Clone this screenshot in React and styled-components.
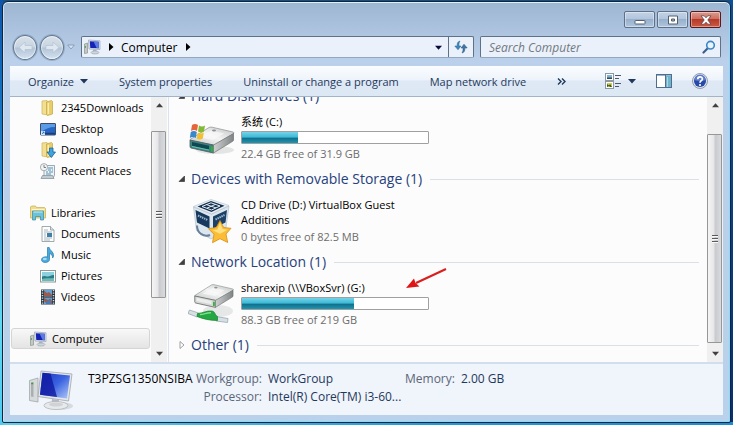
import styled, { createGlobalStyle } from 'styled-components';

const GlobalStyle = createGlobalStyle`
  * {
    box-sizing: border-box;
  }

  body {
    margin: 0;
    font-family: "Open Sans", "Noto Sans CJK SC", sans-serif;
    font-size: 12px;
    line-height: 15px;
    color: #000;
  }

  button {
    padding: 0;
    border: 0;
    background: none;
    font: inherit;
    color: inherit;
  }

  svg {
    display: block;
    flex: none;
  }
`;

const Desktop = styled.div`
  display: flex;
  height: 100vh;
  min-height: 320px;
  padding: 1px 2px 2px;
  background:
    linear-gradient(180deg, #0d56ac 0%, #1a86cf 40%, #5fd8f2 75%, #4ccaf0 100%) left / 3px 100% no-repeat,
    linear-gradient(90deg, #5fd0ee, #1e9bdc 60%, #1b8fd6) bottom / 100% 3px no-repeat,
    linear-gradient(180deg, #0c4f9c, #04307a) right / 3px 100% no-repeat,
    #17507f;
`;

const Window = styled.main`
  flex: 1;
  min-width: 0;
  display: flex;
  flex-direction: column;
  padding: 1px 7px 7px;
  border: 1px solid #10263f;
  border-radius: 6px 6px 2px 2px;
  background: linear-gradient(180deg, #9cb5d1 0, #a9c0dc 22px, #bbd0ea 60px, #b9d1ea 100%);
  box-shadow: inset 0 1px 0 #e6eff8, inset 1px 0 0 #cfe0f2, inset -1px 0 0 #8fd9f3, inset 0 -1px 0 #8fd9f3;
`;

const TitleBar = styled.header`
  display: flex;
  justify-content: flex-end;
  gap: 2px;
  height: 33px;
  padding: 8px 2px 0;
`;

const CaptionButton = styled.button`
  display: flex;
  align-items: center;
  justify-content: center;
  width: 31px;
  height: 17px;
  border: 1px solid ${(props) => (props.$close ? '#5a1a1c' : '#5c7088')};
  border-radius: 2px;
  background: ${(props) => (props.$close
    ? 'linear-gradient(180deg, #dd9a8e 0, #cf6f60 45%, #b63a2a 50%, #cb5a42 100%)'
    : 'linear-gradient(180deg, #c3d3e6 0, #b1c5dc 45%, #98b0cc 50%, #afc5de 100%)')};
  box-shadow: inset 0 0 0 1px rgb(255 255 255 / 40%);
`;

const NavBar = styled.nav`
  display: flex;
  align-items: center;
  gap: 6px;
  height: 22px;
  margin-bottom: 8px;
  padding-right: 2px;
`;

const History = styled.div`
  display: flex;
  align-items: center;
  gap: 3px;
  width: 65px;
  height: 26px;
  padding-left: 3px;
`;

const RoundButton = styled.button`
  display: flex;
  align-items: center;
  justify-content: center;
  width: 25px;
  height: 25px;
  border: 1px solid #62788f;
  border-radius: 50%;
  background: linear-gradient(180deg, #d8e1ea 0, #c8d4e0 48%, #b3c4d6 52%, #d3e2f0 100%);
  box-shadow: inset 0 0 0 1px rgb(255 255 255 / 50%), 0 0 0 1px rgb(120 145 175 / 50%);
`;

const Field = styled.div`
  display: flex;
  align-items: center;
  height: 22px;
  border: 1px solid #5e7186;
  border-bottom-color: #93a7be;
  border-radius: 2px;
  background: #eaf1fa;
`;

const AddressBar = styled(Field)`
  flex: 1;
  min-width: 0;
  padding-left: 2px;
`;

const Crumbs = styled.div`
  flex: 1;
  display: flex;
  align-items: center;
  gap: 6px;
`;

const DropButton = styled.button`
  display: flex;
  align-items: center;
  justify-content: center;
  width: 20px;
  height: 20px;
`;

const RefreshButton = styled.button`
  display: flex;
  align-items: center;
  justify-content: center;
  width: 25px;
  height: 20px;
  border-left: 1px solid #5e7186;
`;

const SearchBox = styled(Field)`
  width: 241px;
  padding: 0 4px 0 8px;
`;

const SearchInput = styled.input`
  flex: 1;
  min-width: 0;
  padding: 0;
  border: 0;
  outline: 0;
  background: none;
  font: inherit;
  font-style: italic;

  &::placeholder {
    color: #73787f;
    opacity: 1;
  }
`;

const Toolbar = styled.div`
  display: flex;
  align-items: center;
  gap: 31px;
  height: 31px;
  padding: 0 15px 0 18px;
  border-bottom: 1px solid #a3b4c8;
  background: linear-gradient(180deg, #fbfdff 0, #eef4fb 45%, #dfe9f6 50%, #dde8f5 100%);
  color: #1e395b;
  font-size: 11px;
  white-space: nowrap;
`;

const ToolButton = styled.button`
  display: flex;
  align-items: center;
  gap: 6px;
`;

const ToolIcons = styled.div`
  flex: 1;
  display: flex;
  align-items: center;
  justify-content: flex-end;
  gap: 20px;
`;

const Body = styled.div`
  flex: 1;
  min-height: 0;
  display: flex;
  background: #fcfcfc;
`;

const Sidebar = styled.aside`
  display: flex;
  width: 159px;
  padding-right: 1px;
  border-right: 1px solid #d9e3f0;
  font-size: 11px;
`;

const Tree = styled.ul`
  flex: 1;
  min-width: 0;
  margin: 0;
  padding: 0 1px;
  overflow: hidden;
  list-style: none;
`;

const TreeItem = styled.li`
  display: flex;
  align-items: center;
  gap: 5px;
  height: 21px;
  margin-top: ${(props) => (props.$root ? '21px' : '0')};
  padding-left: ${(props) => (props.$root ? '18px' : '28px')};
  border: 1px solid ${(props) => (props.$selected ? '#d5d5d5' : 'transparent')};
  border-radius: 3px;
  background: ${(props) => (props.$selected ? 'linear-gradient(180deg, #f8f8f8, #e4e4e4)' : 'none')};
  white-space: nowrap;
`;

const Bar = styled.div`
  display: flex;
  flex-direction: column;
  width: 16px;
  background: #f0f0f0;
`;

const BarArrow = styled.button`
  display: flex;
  align-items: center;
  justify-content: center;
  height: 17px;
`;

const BarSpace = styled.div`
  flex: ${(props) => props.$size} 0 0;
`;

const Thumb = styled.div`
  flex: ${(props) => props.$size} 0 0;
  display: flex;
  align-items: center;
  justify-content: center;
  margin-right: 1px;
  border: 1px solid #979797;
  border-radius: 1px;
  background: linear-gradient(90deg, #f5f5f5 0, #e6e6e8 45%, #c9cacd 55%, #dadbde 100%);
`;

const Content = styled.section`
  flex: 1;
  min-width: 0;
  display: flex;
  flex-direction: column;
  justify-content: flex-end;
  padding: 0 8px 6px 9px;
  overflow: hidden;
  font-size: 11px;
`;

const GroupTitle = styled.h2`
  display: flex;
  align-items: center;
  gap: 5px;
  height: 22px;
  margin: 0;
  color: #27417c;
  font-size: 14px;
  font-weight: 400;
  line-height: 22px;
  white-space: nowrap;

  &::after {
    content: "";
    flex: 1;
    height: 1px;
    margin-left: 3px;
    background: #dcdfe3;
  }
`;

const Drive = styled.div`
  position: relative;
  display: flex;
  gap: 5px;
  height: 61px;
  padding: 7px 0 0 10px;
`;

const DriveIcon = styled.div`
  display: flex;
  align-items: center;
  justify-content: center;
  width: 48px;
  height: 48px;
`;

const DriveInfo = styled.div`
  display: flex;
  flex-direction: column;
  gap: 2px;
  width: 188px;
`;

const Meter = styled.div`
  height: 13px;
  border: 1px solid #a0a0a0;
  border-radius: 1px;
  background: #fff;
`;

const MeterFill = styled.div`
  height: 100%;
  background: linear-gradient(180deg, #74d3e8 0, #40b9d6 45%, #12708d 58%, #2196b0 100%);
`;

const Free = styled.div`
  color: #6d6d6d;
`;

const Pointer = styled.svg`
  position: absolute;
  left: 226px;
  top: -6px;
`;

const Details = styled.footer`
  display: flex;
  height: 53px;
  padding: 6px 18px 0;
  border-top: 2px solid #d3deec;
  background: #f0f4fb;
  line-height: 18px;
  white-space: nowrap;
`;

const PcName = styled.div`
  width: 106px;
  margin-left: 14px;
`;

const Facts = styled.dl`
  display: grid;
  grid-template-columns: 68px 131px auto auto;
  grid-auto-rows: 18px;
  column-gap: 6px;
  margin: 0;
  color: #1e395b;

  dt {
    color: #5a6779;
    text-align: right;
  }

  dd {
    margin: 0;
  }
`;

const Caret = ({ dir = 'down', color = '#1e395b', size = 8 }) => {
  const turn = { down: 0, right: -90, up: 180 }[dir];
  return (
    <svg width={size} height={size} viewBox="0 0 8 8" aria-hidden="true">
      <path d="M0 2h8L4 6.500z" fill={color} transform={`rotate(${turn} 4 4)`} />
    </svg>
  );
};

const Fold = ({ open }) => (
  <svg width="8" height="10" viewBox="0 0 8 10" aria-hidden="true">
    {open
      ? <path d="M6.500 2v5.500H1z" fill="#404040" stroke="#262626" strokeWidth=".6" />
      : <path d="M2 1.500v7l4-3.500z" fill="#fff" stroke="#a0a0a0" />}
  </svg>
);

const ComputerIcon = () => (
  <svg width="17" height="16" viewBox="0 0 17 16" aria-hidden="true">
    <path d="M.5 5l3-1v10l-3 .5z" fill="#c4c9c6" stroke="#8a928f" strokeWidth=".7" />
    <path d="M1.300 7v2" stroke="#4a9a5c" />
    <path d="M4.500 1l11.500.8v8.700L5 10z" fill="#dfe4ea" stroke="#9aa5b3" strokeWidth=".7" />
    <path d="M5.800 2.200l9 .6v6.500l-8.500-.3z" fill="#1522b4" />
    <path d="M9.500 2.400l5.300.4v6.500l-2-.1z" fill="#5a7be4" />
    <path d="M9 10.500h3.500v2H9z" fill="#a9b3be" />
    <ellipse cx="11" cy="13.500" rx="4" ry="1.500" fill="#ced6dd" stroke="#98a3ae" strokeWidth=".6" />
  </svg>
);

const FolderIcon = ({ download }) => (
  <svg width="16" height="16" viewBox="0 0 16 16" aria-hidden="true">
    <path d="M2 1l5-.5 1 1V15l-6-1z" fill="#f2df92" stroke="#cbb25a" strokeWidth=".7" />
    <path d="M6.500 2l5-1.500 1 1v12.500l-5 1.500-1-1z" fill="#e9cd69" stroke="#c3a441" strokeWidth=".7" />
    <path d="M8.300 3v11" stroke="#fbf0b9" strokeWidth="1.300" />
    {download && (
      <path d="M9.500 6h3.500v4h2.500L11.300 15.500 7 10h2.500z" fill="#3fa3dd" stroke="#1b6499" strokeWidth=".8" />
    )}
  </svg>
);

const DesktopIcon = () => (
  <svg width="16" height="16" viewBox="0 0 16 16" aria-hidden="true">
    <rect x=".5" y="2.500" width="15" height="11.500" rx=".5" fill="#2566c4" stroke="#3a4e6c" />
    <path d="M1 3h14v3C9 6 5 8 1 11z" fill="#5c9ce6" />
    <path d="M1 12.500h14" stroke="#1d3f78" strokeWidth="1.500" />
    <rect x="1" y="10" width="4" height="4" fill="#cfe5fa" />
    <path d="M2 13l2-2M2.500 11H4v1.500" fill="none" stroke="#1d5fae" strokeWidth=".7" />
  </svg>
);

const RecentIcon = () => (
  <svg width="16" height="16" viewBox="0 0 16 16" aria-hidden="true">
    <path d="M4 2.500h10.500V12l-1 2.500H3.500L4 12z" fill="#eef3f6" stroke="#8497a5" strokeWidth=".8" />
    <path d="M2.500 12.500h10l1.500 3H1z" fill="#c2ccd3" stroke="#7d8c98" strokeWidth=".7" />
    <path d="M8 5h5M8 7h3M12 7h1M6 9h2M9 9h4M6 11h5" stroke="#5590b5" />
    <circle cx="4" cy="4.200" r="3.600" fill="#f2f4f4" stroke="#919da5" strokeWidth=".8" />
    <path d="M4 2v2.500h2" fill="none" stroke="#59656d" strokeWidth=".8" />
  </svg>
);

const LibrariesIcon = () => (
  <svg width="16" height="16" viewBox="0 0 16 16" aria-hidden="true">
    <path d="M.5 2l1-1h4l1 1.500h8l1 1V13H.5z" fill="#f0dc89" stroke="#c7ae57" strokeWidth=".7" />
    <path d="M1.500 4.500h13" stroke="#fff5c9" />
    <path d="M2.500 6h11v9h-3v-3.500h-5V15h-3z" fill="#6cc2da" stroke="#338ba9" strokeWidth=".7" />
    <path d="M3.500 7h9" stroke="#c6edf5" />
  </svg>
);

const DocumentIcon = () => (
  <svg width="16" height="16" viewBox="0 0 16 16" aria-hidden="true">
    <path d="M2 .5h8.500L14 4v11.500H2z" fill="#fbfcfc" stroke="#8c9797" strokeWidth=".8" />
    <path d="M10.500.5V4H14" fill="#dce3e6" stroke="#8c9797" strokeWidth=".8" />
    <path d="M4 4h4M4 6h8M4 8h2M4 10h2M4 12h8M4 14h6" stroke="#9ba7ad" strokeWidth=".8" />
    <rect x="7" y="7" width="5" height="4" fill="#3f80a6" />
  </svg>
);

const MusicIcon = () => (
  <svg width="16" height="16" viewBox="0 0 16 16" aria-hidden="true">
    <path d="M7.500.5h1.700C9.500 3.500 14 4.500 13.500 9c-.2 1-.5 1.600-1 2 .3-2.500-.8-3.800-3-4.500v6c0 1.800-2 3-4.300 3C3 15.500 1.500 14.300 1.500 12.800c0-2 2.500-3.500 6-2.800z" fill="#4aa9dc" stroke="#2778ad" strokeWidth=".7" />
    <ellipse cx="4.800" cy="12" rx="2" ry="1.200" fill="#a4dbf5" />
  </svg>
);

const PictureIcon = () => (
  <svg width="16" height="16" viewBox="0 0 16 16" aria-hidden="true">
    <rect x=".5" y="2.500" width="15" height="11.500" fill="#fafbfb" stroke="#8d9899" />
    <rect x="2" y="4" width="12" height="8.500" fill="#8bd0de" />
    <path d="M2 8.500c3-1.500 4 .5 6 0s4-2 6-1.500v5.500H2z" fill="#2b7d83" />
    <path d="M2 11c4-1.500 8 0 12-1v2.500H2z" fill="#6bb9b8" />
  </svg>
);

const VideoIcon = () => (
  <svg width="16" height="16" viewBox="0 0 16 16" aria-hidden="true">
    <rect x="1" y=".5" width="14" height="15" fill="#273442" />
    <path d="M2.500 1v14M13.500 1v14" stroke="#cfd9df" strokeWidth="1.500" strokeDasharray="1.200 1.300" />
    <rect x="4" y="1" width="8" height="6.500" fill="#5fa3d8" />
    <rect x="4" y="8.500" width="8" height="6.500" fill="#5fa3d8" />
    <path d="M4 1.500l3 2.500 2-1 3 3v1.500H4zM4 9l4 2 2-1.500L12 12v3H7l-3-3z" fill="#9b5b4c" />
    <path d="M6 14c1-2 3-3 5-2v3H6z" fill="#3f7cbc" />
  </svg>
);

const ViewsIcon = () => (
  <svg width="17" height="16" viewBox="0 0 17 16" aria-hidden="true">
    <rect x=".5" y=".5" width="8" height="7" fill="#fff" stroke="#8d98a6" />
    <rect x="2" y="2" width="5" height="4" fill="#7fb3cf" />
    <path d="M2 4.500h5V6H2z" fill="#2f4b58" />
    <rect x=".5" y="8.500" width="8" height="7" fill="#fff" stroke="#8d98a6" />
    <rect x="2" y="10" width="5" height="4" fill="#d3cf4b" />
    <path d="M2 11l2 1.500 1-1.500 2 3H5l-1-1-2 1z" fill="#345630" />
    <path d="M10 2.500h6M10 5.500h4M10 10.500h6M10 13.500h4" stroke="#4d5968" />
  </svg>
);

const PaneIcon = () => (
  <svg width="16" height="14" viewBox="0 0 16 14" aria-hidden="true">
    <rect x=".5" y=".5" width="15" height="13" fill="#fff" stroke="#4f6d8d" />
    <path d="M1 1.500h14" stroke="#9bb5cc" />
    <rect x="10" y="2" width="5" height="11" fill="#70b5cb" />
    <path d="M11.500 3v10" stroke="#a8d8e4" />
    <path d="M9.500 1v12" stroke="#4f6d8d" />
  </svg>
);

const HelpIcon = () => (
  <svg width="16" height="16" viewBox="0 0 16 16" aria-hidden="true">
    <circle cx="8" cy="8" r="7.500" fill="#dfe4ee" stroke="#7d879a" strokeWidth=".8" />
    <circle cx="8" cy="8" r="6" fill="#2749a8" />
    <path d="M2.500 7a5.500 5.500 0 0 1 11 0c-3 1.500-8 1.500-11 0z" fill="#5b7bcb" />
    <path d="M5.700 6.300c0-3.200 4.800-3.100 4.700-.3C10.300 7.700 8 7.600 8 9.700" fill="none" stroke="#fff" strokeWidth="1.700" />
    <circle cx="8" cy="12" r="1.100" fill="#fff" />
  </svg>
);

const RefreshIcon = () => (
  <svg width="14" height="14" viewBox="0 0 14 14" aria-hidden="true">
    <path d="M6 1C3.500 1.500 3 3.500 3.200 6H.8L4 9.800 7 6H5C4.900 4 5 2.500 6 1z" fill="#3b88bd" stroke="#2a6593" strokeWidth=".5" />
    <path d="M8 13c2.500-.5 3-2.500 2.800-5h2.400L10 4.200 7 8h2c.1 2 0 3.500-1 5z" fill="#3f76a8" stroke="#2a547f" strokeWidth=".5" />
  </svg>
);

const SearchIcon = () => (
  <svg width="14" height="14" viewBox="0 0 14 14" aria-hidden="true">
    <path d="M6 8L1.500 12.500" stroke="#3a5f8f" strokeWidth="2.200" strokeLinecap="round" />
    <circle cx="8.500" cy="5.200" r="3.800" fill="#e8f4fc" stroke="#3b86c8" strokeWidth="1.600" />
  </svg>
);

const DiskBody = ({ dark }) => (
  <g>
    <defs>
      <linearGradient id="disk-top" x1="0" y1="1" x2="1" y2="0">
        <stop offset="0" stopColor="#c4c6c7" />
        <stop offset=".5" stopColor="#f4f4f4" />
        <stop offset="1" stopColor="#bfc1c2" />
      </linearGradient>
      <linearGradient id="disk-side" x1="0" y1="0" x2="1" y2="0">
        <stop offset="0" stopColor="#cfd1d1" />
        <stop offset="1" stopColor="#818485" />
      </linearGradient>
    </defs>
    <path d="M2 16.500L21 4.500c1-.5 2-.5 3-.3L45 9c1.200.4 1.200 1.200 0 2L27.500 21.500c-1 .6-2 .6-3 .4L2.500 17.500z" fill="url(#disk-top)" stroke="#8b8e8f" strokeWidth=".7" />
    <path d="M11 14.500L23 7.500l13 3-11 6.500z" fill="#fafafa" opacity=".7" />
    <path d="M2 17L25.500 22v8L3 25c-.7-.2-1-.7-1-1.500z" fill={dark ? '#3b8583' : '#d5d7d7'} stroke="#555959" strokeWidth=".8" />
    <path d="M4 19l17 3.700v3.800L4 22.800z" fill={dark ? '#0f4850' : '#eceeee'} />
    {dark && <path d="M4 23.500l17 3.600" stroke="#5fc2b4" />}
    <path d="M25.500 22L45.500 10.500V17c0 .6-.3 1-.8 1.300L25.500 30z" fill="url(#disk-side)" stroke="#6f7374" strokeWidth=".7" />
    <path d="M23.800 23.500v5" stroke="#2cb52f" strokeWidth="2" />
    <ellipse cx="26" cy="7.500" rx="2" ry="1" fill="#8e9293" />
  </g>
);

const SystemDiskIcon = () => (
  <svg width="48" height="34" viewBox="0 0 48 34" aria-hidden="true">
    <ellipse cx="27" cy="29" rx="19" ry="4" fill="#e3e4e4" />
    <g transform="translate(0 2)"><DiskBody dark /></g>
    <path d="M4 4c2-1.500 4-1.500 6 0l-1 6c-2-1.300-4-1.300-6 0z" fill="#e6653a" />
    <path d="M11 4.500c2 1.200 4 1.200 6 0l-1 6c-2 1.200-4 1.200-6 0z" fill="#84b935" />
    <path d="M2.800 11c2-1.300 4-1.300 6 0l-1 6c-2-1.300-4-1.300-6 0z" fill="#3987cd" />
    <path d="M9.800 11.500c2 1.200 4 1.200 6 0l-1 6c-2 1.200-4 1.200-6 0z" fill="#f3c02e" />
  </svg>
);

const NetworkDiskIcon = () => (
  <svg width="48" height="40" viewBox="0 0 48 40" aria-hidden="true">
    <ellipse cx="30" cy="27" rx="15" ry="6" fill="#e6e8e8" />
    <g transform="translate(5 -3) scale(.88)"><DiskBody /></g>
    <path d="M1.500 26l9 3-1.500 4-9-3.500z" fill="#d5e1e5" stroke="#8fa0a8" strokeWidth=".7" />
    <path d="M28 32.500l12 2-.5 4L28 37z" fill="#d5e1e5" stroke="#8fa0a8" strokeWidth=".7" />
    <path d="M9.500 29.500c6-.5 9-3 14-2.500 4 .3 3 4 6 5.500v4c-8 0-14-1.500-20.500-4z" fill="#25a741" stroke="#14812c" strokeWidth=".7" />
    <path d="M12 30.500c4 0 7-2 11-1.700" fill="none" stroke="#7ee08d" strokeWidth="1.500" />
  </svg>
);

const VirtualBoxIcon = () => (
  <svg width="42" height="48" viewBox="0 0 42 48" aria-hidden="true">
    <path d="M2.500 10l3 23.500L20 42l14.500-8.500L38 9 20.500 17z" fill="#dce6ee" stroke="#a7b8c6" strokeWidth=".6" />
    <path d="M2.500 9.500L20 2.500l18 6L20.500 17z" fill="#e9f0f5" stroke="#b0bfcb" strokeWidth=".6" />
    <path d="M6.500 9.500L20 4l13.500 4.800-13 6.200z" fill="#15304f" />
    <path d="M11 9.500l9-3.700 9 3.200-8.500 4zM15.500 7.600l9.500 3.300M24.500 7.400l-8.500 3.700" fill="none" stroke="#e4edf4" strokeWidth="1" />
    <path d="M4.500 13l14 6.500v12L6 25.500z" fill="#17395d" />
    <path d="M7 18.500l9.500 4.500" stroke="#9eb7cd" strokeWidth="2" strokeDasharray="1.500 .7" />
    <path d="M22 19.500l14-6.500-1.500 12.500L22 31.500z" fill="#1d4066" />
    <path d="M24.500 22.500l9-4.500" stroke="#9eb7cd" strokeWidth="2" strokeDasharray="1.500 .7" />
    <path d="M6 28.500c0 8 7 12 13 9.500" fill="none" stroke="#68809c" strokeWidth="2" />
    <path d="M29 23.500l3.700 7 7.300.8-5 5.700 1.700 8.500-7.700-3.800-7.500 4 1.500-8.500-5.500-5.500 7.800-1.200z" fill="#fbbd35" stroke="#d88d16" strokeWidth=".8" />
    <path d="M29 26l2.500 6 5 .7-7.500 4-7.500-3.500 5-.7z" fill="#ffe184" />
  </svg>
);

const BigComputerIcon = () => (
  <svg width="46" height="42" viewBox="0 0 46 42" aria-hidden="true">
    <defs>
      <linearGradient id="screen" x1="0" y1="0" x2="1" y2="1">
        <stop offset="0" stopColor="#1a34c0" />
        <stop offset=".5" stopColor="#3b63e0" />
        <stop offset="1" stopColor="#b3cbfa" />
      </linearGradient>
    </defs>
    <ellipse cx="31" cy="36" rx="14" ry="4" fill="#d6dbe2" />
    <path d="M1.500 10.500L10 8v24l-8.500-1.500z" fill="#d7dada" stroke="#9ca1a2" strokeWidth=".7" />
    <path d="M3 12.500l2.500-.5v15L3 26.500z" fill="#a9aeae" />
    <path d="M3.200 13.500h2" stroke="#3a9b3d" strokeWidth="1.500" />
    <path d="M13 1l31 3-3.500 27L10 26.500z" fill="#e4e7ea" stroke="#a0a6ad" strokeWidth=".8" />
    <path d="M14.500 2.800l27.500 2.700-3 23L12 24.800z" fill="url(#screen)" />
    <path d="M14.500 2.800l8 .8 6.500 23.500-17-2.300z" fill="#1019a0" opacity=".8" />
    <path d="M24 29l7 1-.5 4h-7z" fill="#b5babe" />
    <ellipse cx="28" cy="35.500" rx="12" ry="4" fill="#e7e9ea" stroke="#aab0b3" strokeWidth=".7" />
    <ellipse cx="28" cy="34.500" rx="7" ry="2" fill="#cfd3d5" />
  </svg>
);

const places = [
  { name: '2345Downloads', icon: <FolderIcon /> },
  { name: 'Desktop', icon: <DesktopIcon /> },
  { name: 'Downloads', icon: <FolderIcon download /> },
  { name: 'Recent Places', icon: <RecentIcon /> },
  { name: 'Libraries', icon: <LibrariesIcon />, root: true },
  { name: 'Documents', icon: <DocumentIcon /> },
  { name: 'Music', icon: <MusicIcon /> },
  { name: 'Pictures', icon: <PictureIcon /> },
  { name: 'Videos', icon: <VideoIcon /> },
  { name: 'Computer', icon: <ComputerIcon />, root: true, selected: true },
];

const groups = [
  {
    title: 'Hard Disk Drives (1)', name: '系统 (C:)', used: 30, free: '22.4 GB free of 31.9 GB', icon: <SystemDiskIcon />,
  },
  {
    title: 'Devices with Removable Storage (1)', name: 'CD Drive (D:) VirtualBox Guest Additions', free: '0 bytes free of 82.5 MB', icon: <VirtualBoxIcon />,
  },
  {
    title: 'Network Location (1)', name: 'sharexip (\\\\VBoxSvr) (G:)', used: 60, free: '88.3 GB free of 219 GB', icon: <NetworkDiskIcon />, marked: true,
  },
];

const ScrollBar = ({ before, size, after }) => (
  <Bar>
    <BarArrow type="button" aria-label="Scroll up"><Caret dir="up" color="#404040" size={7} /></BarArrow>
    <BarSpace $size={before} />
    <Thumb $size={size}>
      <svg width="8" height="9" viewBox="0 0 8 9" aria-hidden="true">
        <path d="M1 1.500h6M1 4.500h6M1 7.500h6" stroke="#5b5b5b" />
        <path d="M1 2.500h6M1 5.500h6M1 8.500h6" stroke="#f8f8f8" />
      </svg>
    </Thumb>
    <BarSpace $size={after} />
    <BarArrow type="button" aria-label="Scroll down"><Caret color="#404040" size={7} /></BarArrow>
  </Bar>
);

const App = () => (
  <>
    <GlobalStyle />
    <Desktop>
      <Window>
        <TitleBar>
          <CaptionButton type="button" aria-label="Minimize">
            <svg width="12" height="10" viewBox="0 0 12 10">
              <rect x="1" y="5.500" width="10" height="3.500" rx=".5" fill="#fff" stroke="#54606f" />
            </svg>
          </CaptionButton>
          <CaptionButton type="button" aria-label="Maximize">
            <svg width="12" height="10" viewBox="0 0 12 10">
              <path fillRule="evenodd" d="M1.500 1h9v8h-9zM4.500 4h3v2h-3z" fill="#fff" stroke="#54606f" />
            </svg>
          </CaptionButton>
          <CaptionButton type="button" aria-label="Close" $close>
            <svg width="12" height="10" viewBox="0 0 12 10">
              <path d="M1 .8h3.200L6 2.800 7.800.8H11L7.800 5 11 9.200H7.800L6 7.200l-1.800 2H1L4.200 5z" fill="#fff" stroke="#5d4448" strokeWidth=".8" />
            </svg>
          </CaptionButton>
        </TitleBar>

        <NavBar>
          <History>
            <RoundButton type="button" aria-label="Back">
              <svg width="15" height="13" viewBox="0 0 15 13">
                <path d="M1 6.500L7 1v3.500h7v4H7V12z" fill="#dfe8f1" stroke="#b2c3d4" strokeWidth=".7" />
              </svg>
            </RoundButton>
            <RoundButton type="button" aria-label="Forward">
              <svg width="15" height="13" viewBox="0 0 15 13">
                <path d="M14 6.500L8 1v3.500H1v4h7V12z" fill="#dfe8f1" stroke="#b2c3d4" strokeWidth=".7" />
              </svg>
            </RoundButton>
            <button type="button" aria-label="Recent pages">
              <svg width="8" height="6" viewBox="0 0 8 6">
                <path d="M.7 1h6.600L4 5z" fill="#d9e5f2" stroke="#7b93ae" strokeWidth=".8" />
              </svg>
            </button>
          </History>
          <AddressBar>
            <Crumbs>
              <ComputerIcon />
              <Caret dir="right" color="#000" />
              <span>Computer</span>
              <Caret dir="right" color="#000" />
            </Crumbs>
            <DropButton type="button" aria-label="Previous locations"><Caret color="#0a0a3c" size={7} /></DropButton>
            <RefreshButton type="button" aria-label="Refresh"><RefreshIcon /></RefreshButton>
          </AddressBar>
          <SearchBox>
            <SearchInput type="text" aria-label="Search Computer" placeholder="Search Computer" />
            <SearchIcon />
          </SearchBox>
        </NavBar>

        <Toolbar>
          <ToolButton type="button">
            Organize
            <Caret />
          </ToolButton>
          <ToolButton type="button">System properties</ToolButton>
          <ToolButton type="button">Uninstall or change a program</ToolButton>
          <ToolButton type="button">Map network drive</ToolButton>
          <ToolButton type="button" aria-label="More commands">
            <svg width="9" height="7" viewBox="0 0 9 7">
              <path d="M1 .5l3 3-3 3M5 .5l3 3-3 3" fill="none" stroke="#1e395b" strokeWidth="1.400" />
            </svg>
          </ToolButton>
          <ToolIcons>
            <ToolButton type="button" aria-label="Change view">
              <ViewsIcon />
              <Caret />
            </ToolButton>
            <ToolButton type="button" aria-label="Preview pane"><PaneIcon /></ToolButton>
            <ToolButton type="button" aria-label="Help"><HelpIcon /></ToolButton>
          </ToolIcons>
        </Toolbar>

        <Body>
          <Sidebar>
            <Tree>
              {places.map(({
                name, icon, root, selected,
              }) => (
                <TreeItem key={name} $root={root} $selected={selected}>
                  {icon}
                  {name}
                </TreeItem>
              ))}
            </Tree>
            <ScrollBar before={17} size={167} after={48} />
          </Sidebar>
          <Content>
            {groups.map(({
              title, name, used, free, icon, marked,
            }) => (
              <div key={title}>
                <GroupTitle>
                  <Fold open />
                  {title}
                </GroupTitle>
                <Drive>
                  <DriveIcon>{icon}</DriveIcon>
                  <DriveInfo>
                    <div>{name}</div>
                    {used && (
                      <Meter role="progressbar" aria-label={`${name} used space`} aria-valuenow={used}>
                        <MeterFill style={{ width: `${used}%` }} />
                      </Meter>
                    )}
                    <Free>{free}</Free>
                  </DriveInfo>
                  {marked && (
                    <Pointer width="44" height="24" viewBox="0 0 44 24" aria-hidden="true">
                      <path d="M42 2L12 16" stroke="#d8201f" strokeWidth="2.200" />
                      <path d="M2 21l8-9.500 1.500 4.500 4 3.500z" fill="#e01414" />
                    </Pointer>
                  )}
                </Drive>
              </div>
            ))}
            <GroupTitle>
              <Fold />
              Other (1)
            </GroupTitle>
          </Content>
          <ScrollBar before={20} size={210} after={2} />
        </Body>

        <Details>
          <BigComputerIcon />
          <PcName>T3PZSG1350NSIBA</PcName>
          <Facts>
            <dt>Workgroup:</dt>
            <dd>WorkGroup</dd>
            <dt>Memory:</dt>
            <dd>2.00 GB</dd>
            <dt>Processor:</dt>
            <dd>Intel(R) Core(TM) i3-60...</dd>
          </Facts>
        </Details>
      </Window>
    </Desktop>
  </>
);

export default App;
